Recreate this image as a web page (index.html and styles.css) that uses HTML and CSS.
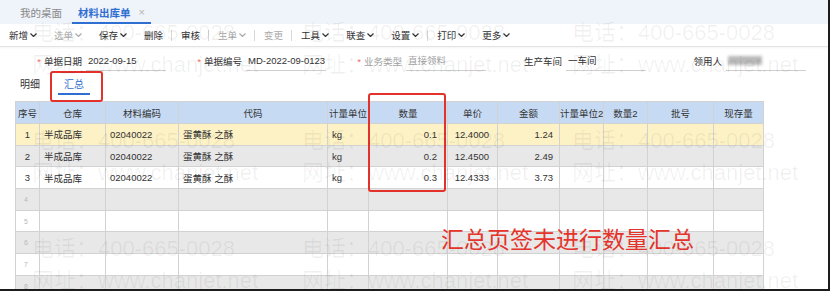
FILE: index.html
```html
<!DOCTYPE html>
<html lang="zh-CN">
<head>
  <meta charset="UTF-8" />
  <meta name="viewport" content="width=device-width, initial-scale=1.0" />
  <title>材料出库单</title>
  <link rel="stylesheet" href="styles.css">
</head>
<body>
  <div class="page">
    <!-- Tabs -->
    <div class="tabbar">
      <span class="tab">我的桌面</span>
      <span class="tab active">材料出库单<span class="close">×</span></span>
    </div>

    <!-- Toolbar -->
    <div class="toolbar">
      <span class="tool">新增<svg class="caret" viewBox="0 0 7 4"><polyline points="0.5,0.5 3.5,3.5 6.5,0.5"/></svg></span>
      <span class="tool off">选单<svg class="caret" viewBox="0 0 7 4"><polyline points="0.5,0.5 3.5,3.5 6.5,0.5"/></svg></span>
      <span class="tool">保存<svg class="caret" viewBox="0 0 7 4"><polyline points="0.5,0.5 3.5,3.5 6.5,0.5"/></svg></span>
      <span class="tool">删除</span>
      <span class="sep"></span>
      <span class="tool">审核</span>
      <span class="sep"></span>
      <span class="tool off">生单<svg class="caret" viewBox="0 0 7 4"><polyline points="0.5,0.5 3.5,3.5 6.5,0.5"/></svg></span>
      <span class="sep"></span>
      <span class="tool off">变更</span>
      <span class="sep"></span>
      <span class="tool">工具<svg class="caret" viewBox="0 0 7 4"><polyline points="0.5,0.5 3.5,3.5 6.5,0.5"/></svg></span>
      <span class="tool">联查<svg class="caret" viewBox="0 0 7 4"><polyline points="0.5,0.5 3.5,3.5 6.5,0.5"/></svg></span>
      <span class="tool">设置<svg class="caret" viewBox="0 0 7 4"><polyline points="0.5,0.5 3.5,3.5 6.5,0.5"/></svg></span>
      <span class="sep"></span>
      <span class="tool">打印<svg class="caret" viewBox="0 0 7 4"><polyline points="0.5,0.5 3.5,3.5 6.5,0.5"/></svg></span>
      <span class="tool">更多<svg class="caret" viewBox="0 0 7 4"><polyline points="0.5,0.5 3.5,3.5 6.5,0.5"/></svg></span>
    </div>

    <!-- Header fields -->
    <div class="form-row">
      <div class="field"><label class="req">单据日期</label><span class="input">2022-09-15</span></div>
      <div class="field"><label class="req">单据编号</label><span class="input">MD-2022-09-0123</span></div>
      <div class="field disabled"><label class="req">业务类型</label><span class="input">直接领料</span></div>
      <div class="field"><label>生产车间</label><span class="input">一车间</span></div>
      <div class="field"><label>领用人</label><span class="input"><span class="blur"></span></span></div>
    </div>

    <!-- Sub tabs -->
    <div class="subtabs">
      <span class="subtab">明细</span>
      <span class="subtab active">汇总</span>
    </div>

    <!-- Grid -->
    <div class="grid">
      <table>
        <colgroup>
          <col style="width:24px"><col style="width:66px"><col style="width:73px"><col style="width:149px">
          <col style="width:41px"><col style="width:79px"><col style="width:50px"><col style="width:62px">
          <col style="width:44px"><col style="width:44px"><col style="width:66px"><col style="width:50px">
        </colgroup>
        <thead>
          <tr>
            <th>序号</th><th>仓库</th><th>材料编码</th><th>代码</th><th>计量单位</th><th>数量</th>
            <th>单价</th><th>金额</th><th>计量单位2</th><th>数量2</th><th>批号</th><th>现存量</th>
          </tr>
        </thead>
        <tbody>
          <tr class="selected">
            <td class="idx">1</td><td>半成品库</td><td>02040022</td><td>蛋黄酥 之酥</td><td>kg</td>
            <td class="num qty">0.1</td><td class="num">12.4000</td><td class="num amt">1.24</td>
            <td></td><td></td><td></td><td></td>
          </tr>
          <tr>
            <td class="idx">2</td><td>半成品库</td><td>02040022</td><td>蛋黄酥 之酥</td><td>kg</td>
            <td class="num qty">0.2</td><td class="num">12.4500</td><td class="num amt">2.49</td>
            <td></td><td></td><td></td><td></td>
          </tr>
          <tr>
            <td class="idx">3</td><td>半成品库</td><td>02040022</td><td>蛋黄酥 之酥</td><td>kg</td>
            <td class="num qty">0.3</td><td class="num">12.4333</td><td class="num amt">3.73</td>
            <td></td><td></td><td></td><td></td>
          </tr>
          <tr><td class="idx empty">4</td><td></td><td></td><td></td><td></td><td></td><td></td><td></td><td></td><td></td><td></td><td></td></tr>
          <tr><td class="idx empty">5</td><td></td><td></td><td></td><td></td><td></td><td></td><td></td><td></td><td></td><td></td><td></td></tr>
          <tr><td class="idx empty">6</td><td></td><td></td><td></td><td></td><td></td><td></td><td></td><td></td><td></td><td></td><td></td></tr>
          <tr><td class="idx empty">7</td><td></td><td></td><td></td><td></td><td></td><td></td><td></td><td></td><td></td><td></td><td></td></tr>
          <tr><td class="idx empty">8</td><td></td><td></td><td></td><td></td><td></td><td></td><td></td><td></td><td></td><td></td><td></td></tr>
        </tbody>
      </table>
    </div>

    <!-- Annotations -->
    <div class="mark mark-tab"></div>
    <div class="mark mark-qty"></div>
    <div class="note">汇总页签未进行数量汇总</div>

    <!-- Watermark -->
    <div class="watermark">
      <div class="wm"><span>电话：400-665-0028</span><span>网址：www.chanjet.net</span></div>
      <div class="wm"><span>电话：400-665-0028</span><span>网址：www.chanjet.net</span></div>
      <div class="wm"><span>电话：400-665-0028</span><span>网址：www.chanjet.net</span></div>
      <div class="wm"><span>电话：400-665-0028</span><span>网址：www.chanjet.net</span></div>
      <div class="wm"><span>电话：400-665-0028</span><span>网址：www.chanjet.net</span></div>
      <div class="wm"><span>电话：400-665-0028</span><span>网址：www.chanjet.net</span></div>
      <div class="wm"><span>电话：400-665-0028</span><span>网址：www.chanjet.net</span></div>
      <div class="wm"><span>电话：400-665-0028</span><span>网址：www.chanjet.net</span></div>
      <div class="wm"><span>电话：400-665-0028</span><span>网址：www.chanjet.net</span></div>
    </div>
  </div>
</body>
</html>
```

FILE: styles.css
```css
* {
  box-sizing: border-box;
}

body {
  margin: 0;
  font-family: "Liberation Sans", "Noto Sans CJK SC", sans-serif;
  color: #333;
  background: #fff;
}

.page {
  position: relative;
  width: 830px;
  height: 291px;
  overflow: hidden;
  border-right: 2px solid #1c1c1c;
  border-bottom: 2px solid #1c1c1c;
}

/* top tabs */
.tabbar {
  display: flex;
  height: 24px;
  padding-left: 14px;
  background: #eff3fa;
  font-size: 10.5px;
}

.tab {
  display: flex;
  align-items: center;
  height: 24px;
  padding: 2px 6px 0;
  color: #888;
  border-bottom: 2px solid transparent;
}

.tab.active {
  margin-left: 4px;
  color: #2f6fd2;
  font-weight: bold;
  border-bottom-color: #2f6fd2;
}

.close {
  margin-left: 8px;
  color: #b5b5b5;
  font-weight: normal;
  font-size: 11px;
}

/* toolbar */
.toolbar {
  display: flex;
  align-items: center;
  height: 23px;
  padding-left: 9px;
  font-size: 9.5px;
  border-bottom: 1px solid #e3e3e3;
  box-shadow: 0 1px 2px rgba(0, 0, 0, 0.05);
}

.tool {
  display: flex;
  align-items: center;
  margin-right: 17px;
  color: #333;
}

.tool.off {
  color: #aaa;
}

.caret {
  width: 7px;
  height: 4px;
  margin-left: 2px;
  fill: none;
  stroke: currentColor;
  stroke-width: 1.2;
}

.sep {
  width: 1px;
  height: 11px;
  margin: 0 9px 0 -9px;
  background: #d8d8d8;
}

/* form fields */
.form-row {
  display: flex;
  margin-top: 3px;
  padding-left: 6px;
  font-size: 9.5px;
}

.field {
  display: flex;
  align-items: center;
  width: 160px;
  height: 21px;
}

.field label {
  width: 76px;
  margin-right: 4px;
  text-align: right;
}

.field label.req::before {
  content: "*";
  margin-right: 3px;
  color: #f26a6a;
}

.input {
  display: flex;
  align-items: center;
  width: 80px;
  height: 21px;
  padding-left: 2px;
  border-bottom: 1px solid #cfcfcf;
}

.field.disabled label,
.field.disabled .input {
  color: #a3a3a3;
}

.blur {
  width: 34px;
  height: 9px;
  background: #b9b9b9;
  filter: blur(1.5px);
}

/* sub tabs */
.subtabs {
  display: flex;
  height: 22px;
  margin-top: 2px;
  padding-left: 14px;
  font-size: 10px;
}

.subtab {
  display: flex;
  align-items: center;
  padding: 0 6px;
  margin-right: 12px;
  border-bottom: 2px solid transparent;
}

.subtab.active {
  color: #2f6fd2;
  border-bottom-color: #2f6fd2;
}

/* grid */
.grid {
  margin-top: 6px;
  padding-left: 15px;
}

table {
  width: 748px;
  table-layout: fixed;
  border-collapse: collapse;
  font-size: 9.5px;
}

th,
td {
  border: 1px solid #d2d2d2;
  padding: 0 4px;
  white-space: nowrap;
  overflow: hidden;
}

th {
  height: 22px;
  padding: 0;
  background: #c6dbf3;
  font-weight: normal;
  text-align: center;
}

td {
  height: 21.7px;
  text-align: left;
}

tbody tr:nth-child(even) {
  background: #e8e8e8;
}

tbody tr.selected {
  background: #fdf2c6;
}

td.idx {
  padding: 0;
  text-align: center;
}

td.idx.empty {
  padding-left: 8px;
  text-align: left;
  font-size: 7px;
  color: #b8b8b8;
}

td.num {
  text-align: right;
  padding-right: 8px;
}

td.num.qty {
  padding-right: 10px;
}

td.num.amt {
  padding-right: 6px;
}

/* red annotations */
.mark {
  position: absolute;
  border: 2px solid #e3322b;
  border-radius: 3px;
}

.mark-tab {
  left: 50px;
  top: 71px;
  width: 53px;
  height: 31px;
}

.mark-qty {
  left: 368px;
  top: 93px;
  width: 78px;
  height: 99px;
}

.note {
  position: absolute;
  left: 441px;
  top: 226px;
  font-family: "Noto Sans CJK SC", sans-serif;
  font-size: 23px;
  line-height: 1.1;
  color: #e5342c;
}

/* watermark */
.watermark {
  position: absolute;
  top: 0;
  left: 0;
  right: 0;
  bottom: 0;
  display: grid;
  grid-template-columns: repeat(3, 270px);
  grid-auto-rows: 108px;
  padding: 17px 0 0 32px;
  pointer-events: none;
}

.wm {
  display: flex;
  flex-direction: column;
  font-size: 22px;
  line-height: 32px;
  white-space: nowrap;
  color: rgba(0, 0, 0, 0.06);
}
```
